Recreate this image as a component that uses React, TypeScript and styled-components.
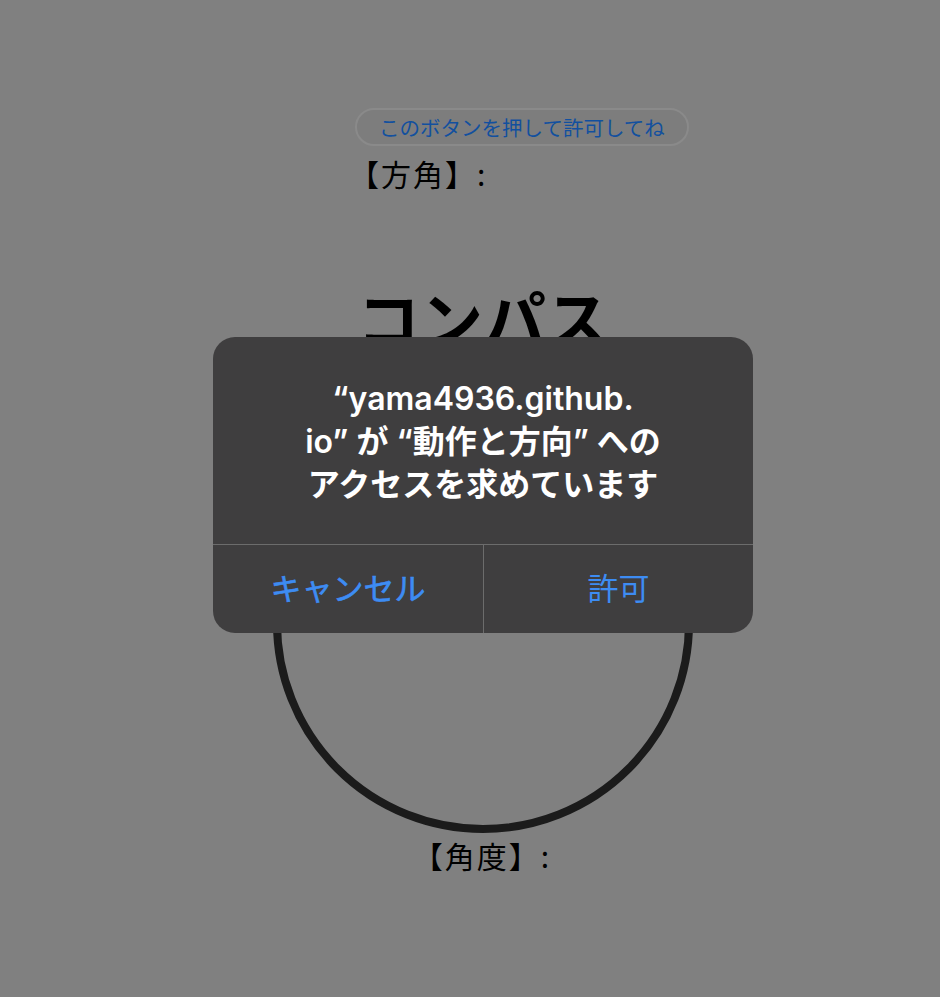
import styled, { createGlobalStyle } from 'styled-components';

const GlobalStyle = createGlobalStyle`
  html, body {
    margin: 0;
    padding: 0;
    background: #808080;
  }
  body {
    font-family: "Noto Sans CJK JP", "Noto Sans", sans-serif;
    color: #000;
  }
`;

const Page = styled.main`
  position: relative;
  width: 940px;
  height: 997px;
  box-sizing: border-box;
  padding: 108px 0 0 26px;
  display: flex;
  flex-direction: column;
  align-items: center;
  overflow: hidden;
`;

const TopBlock = styled.div`
  align-self: flex-start;
  margin-left: 329px;
  display: flex;
  flex-direction: column;
  align-items: flex-start;
`;

const PermissionButton = styled.button`
  height: 38px;
  padding: 0 22px;
  border: 2px solid #8a8a8a;
  border-radius: 19px;
  background: #7d7d7d;
  color: #12509f;
  font-family: "Noto Sans CJK JP", sans-serif;
  font-size: 20.5px;
  line-height: 34px;
  white-space: nowrap;
  cursor: pointer;
`;

const Reading = styled.div`
  font-size: 30px;
  line-height: 42px;
  letter-spacing: 2px;
  margin-top: 6px;
  margin-left: -6px;
`;

const Title = styled.h1`
  margin: 86px 0 0;
  font-size: 63px;
  font-weight: 700;
  line-height: 74px;
`;

const Dial = styled.div`
  margin-top: 59px;
  width: 420px;
  height: 420px;
  box-sizing: border-box;
  border: 8px solid #1b1b1b;
  border-radius: 50%;
`;

const AngleReading = styled(Reading)`
  margin-top: 1px;
  margin-left: -2px;
`;

const Alert = styled.div`
  position: absolute;
  left: 213px;
  top: 337px;
  width: 540px;
  border-radius: 22px;
  background: #3f3e3f;
  overflow: hidden;
  display: flex;
  flex-direction: column;
`;

const AlertMessage = styled.p`
  margin: 0;
  padding: 40px 10px 38px;
  text-align: center;
  color: #fff;
  font-family: Inter, "Noto Sans CJK JP", sans-serif;
  font-weight: 600;
  font-size: 32px;
  line-height: 43px;
`;

const AlertActions = styled.div`
  display: grid;
  grid-template-columns: 270px 1fr;
  height: 88px;
  border-top: 1px solid #6c6c6c;
`;

const AlertAction = styled.button<{ $primary?: boolean }>`
  border: none;
  border-left: ${(p) => (p.$primary ? '1px solid #6c6c6c' : 'none')};
  background: transparent;
  color: #3d8cf3;
  font-family: "Noto Sans CJK JP", sans-serif;
  font-size: 31px;
  font-weight: 400;
  -webkit-text-stroke: ${(p) => (p.$primary ? '0' : '0.6px #3d8cf3')};
  padding: 0 0 6px;
  cursor: pointer;
`;

export default function App() {
  return (
    <>
      <GlobalStyle />
      <Page>
        <TopBlock>
          <PermissionButton>このボタンを押して許可してね</PermissionButton>
          <Reading>【方角】:</Reading>
        </TopBlock>
        <Title>コンパス</Title>
        <Dial />
        <AngleReading>【角度】:</AngleReading>

        <Alert role="alertdialog">
          <AlertMessage>
            “yama4936.github.
            <br />
            io” が “動作と方向” への
            <br />
            アクセスを求めています
          </AlertMessage>
          <AlertActions>
            <AlertAction>キャンセル</AlertAction>
            <AlertAction $primary>許可</AlertAction>
          </AlertActions>
        </Alert>
      </Page>
    </>
  );
}
